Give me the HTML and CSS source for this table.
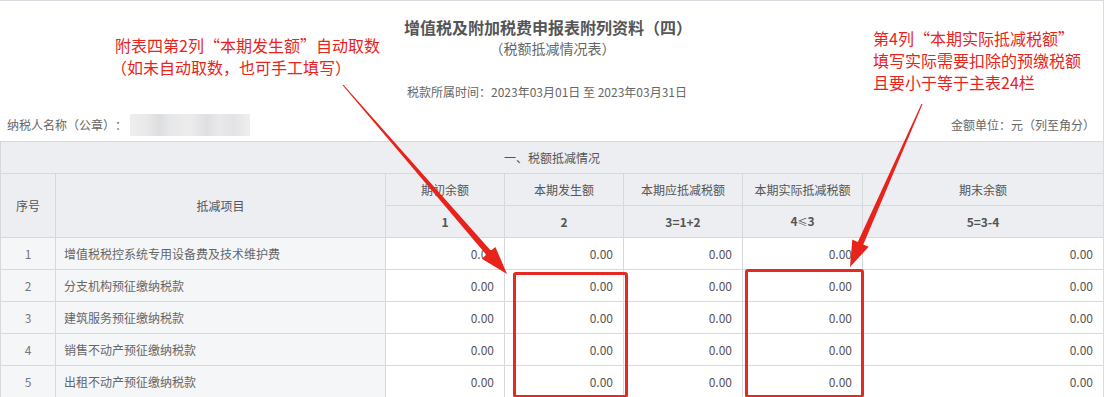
FILE: index.html
```html
<!DOCTYPE html>
<html lang="zh-CN">
<head>
<meta charset="utf-8">
<title>增值税及附加税费申报表附列资料（四）</title>
<link rel="stylesheet" href="styles.css">
</head>
<body>
<div class="page">
  <div class="head">
    <div class="title">增值税及附加税费申报表附列资料<span class="p">（</span>四<span class="p">）</span></div>
    <div class="subtitle"><span class="p">（</span>税额抵减情况表<span class="p">）</span></div>
    <div class="period">税款所属时间<span class="p">：</span>2023年03月01日 至 2023年03月31日</div>
  </div>
  <div class="meta">
    <div class="payer">纳税人名称<span class="p">（</span>公章<span class="p">）</span><span class="p">：</span><span class="blur"></span></div>
    <div class="unit">金额单位<span class="p">：</span>元<span class="p">（</span>列至角分<span class="p">）</span></div>
  </div>
  <table class="grid">
    <colgroup>
      <col class="c-no"><col class="c-item"><col class="c-n"><col class="c-n"><col class="c-n"><col class="c-n2"><col class="c-last">
    </colgroup>
    <thead>
      <tr><th colspan="7">一<span class="p">、</span>税额抵减情况</th></tr>
      <tr><th rowspan="2">序号</th><th rowspan="2">抵减项目</th><th>期初余额</th><th>本期发生额</th><th>本期应抵减税额</th><th>本期实际抵减税额</th><th>期末余额</th></tr>
      <tr class="nums"><th>1</th><th>2</th><th>3=1+2</th><th>4<span class="le">≤</span>3</th><th>5=3-4</th></tr>
    </thead>
    <tbody>
      <tr><td class="no">1</td><td class="item">增值税税控系统专用设备费及技术维护费</td><td>0.00</td><td>0.00</td><td>0.00</td><td>0.00</td><td>0.00</td></tr>
      <tr><td class="no">2</td><td class="item">分支机构预征缴纳税款</td><td>0.00</td><td>0.00</td><td>0.00</td><td>0.00</td><td>0.00</td></tr>
      <tr><td class="no">3</td><td class="item">建筑服务预征缴纳税款</td><td>0.00</td><td>0.00</td><td>0.00</td><td>0.00</td><td>0.00</td></tr>
      <tr><td class="no">4</td><td class="item">销售不动产预征缴纳税款</td><td>0.00</td><td>0.00</td><td>0.00</td><td>0.00</td><td>0.00</td></tr>
      <tr><td class="no">5</td><td class="item">出租不动产预征缴纳税款</td><td>0.00</td><td>0.00</td><td>0.00</td><td>0.00</td><td>0.00</td></tr>
    </tbody>
  </table>

  <div class="note note-left">
    <div>附表四第2列“本期发生额”自动取数</div>
    <div class="indent"><span class="p">（</span>如未自动取数<span class="p">，</span>也可手工填写<span class="p">）</span></div>
  </div>
  <div class="note note-right">
    <div>第4列“本期实际抵减税额”</div>
    <div>填写实际需要扣除的预缴税额</div>
    <div>且要小于等于主表24栏</div>
  </div>
  <div class="hl hl-1"></div>
  <div class="hl hl-2"></div>
  <svg class="arrows" width="1107" height="397" viewBox="0 0 1107 397">
    <polygon fill="#e8231c" points="342.6,84.3 486.3,253.8 481.8,257.7 507,273 495.4,245.9 490.9,249.8 343.4,83.7"/>
    <polygon fill="#e8231c" points="921.5,102.8 857.8,241.0 852.3,238.6 850,266 868.7,245.8 863.3,243.4 922.5,103.2"/>
  </svg>
</div>
</body>
</html>
```
FILE: styles.css
```css
html, body {
  margin: 0;
  padding: 0;
  background: #fff;
}
body {
  font-family: "Noto Sans CJK SC", "Noto Sans", sans-serif;
  color: #555;
  font-size: 12px;
}
.p {
  display: inline-block;
  width: 1em;
  text-align: center;
  line-height: 1;
}
.page {
  position: relative;
  width: 1103px;
  height: 397px;
  border-top: 1px solid #d9dbe0;
  border-right: 1px solid #d9dbe0;
  overflow: hidden;
}
.head {
  padding-top: 16px;
}
.title {
  text-align: center;
  font-size: 16px;
  font-weight: bold;
  line-height: 20px;
  color: #555;
  padding-right: 7px;
}
.subtitle {
  margin-top: 2px;
  text-align: center;
  font-size: 14px;
  line-height: 18px;
  color: #666;
  padding-left: 2px;
}
.period {
  margin-top: 27px;
  margin-left: 407px;
  line-height: 16px;
  color: #666;
}
.meta {
  display: flex;
  justify-content: space-between;
  align-items: center;
  margin-top: 17px;
  padding: 0 8px 0 7px;
  height: 16px;
  line-height: 16px;
  color: #666;
}
.payer {
  display: flex;
  align-items: center;
}
.blur {
  display: inline-block;
  width: 120px;
  height: 22px;
  margin-left: 3px;
  background: linear-gradient(90deg, #eeeeef 0, #e9e9ea 14%, #dcdddf 24%, #e8e8ea 34%, #ececed 50%, #dedfe1 64%, #e9e9eb 74%, #e3e3e5 86%, #efeff0 100%);
}
.grid {
  margin-top: 8px;
  width: 1104px;
  border-collapse: collapse;
  table-layout: fixed;
}
.c-no { width: 55px; }
.c-item { width: 330px; }
.c-n { width: 119px; }
.c-n2 { width: 120px; }
.c-last { width: 241px; }
.grid th, .grid td {
  border: 1px solid #d6d8dc;
  height: 31px;
  padding: 0;
  font-size: 12px;
  line-height: 16px;
}
.grid th {
  background: #eceef2;
  font-weight: normal;
  color: #555;
  text-align: center;
}
.grid .nums th {
  font-weight: bold;
}
.grid .le {
  font-size: 10px;
  font-weight: normal;
}
.grid td {
  background: #fff;
  text-align: right;
  padding-right: 10px;
  color: #555;
}
.grid td.no {
  background: #f5f6f8;
  text-align: center;
  padding-right: 0;
  color: #777;
}
.grid td.item {
  background: #f5f6f8;
  text-align: left;
  padding-left: 8px;
  color: #666;
}
.note {
  position: absolute;
  color: #e8231c;
  font-size: 16px;
}
.note-left {
  left: 115px;
  top: 33px;
  line-height: 22px;
}
.note-left .indent {
  margin-left: -4px;
}
.note-right {
  left: 873px;
  top: 26px;
  line-height: 22px;
}
.hl {
  position: absolute;
  border: 3px solid #e42a22;
  border-radius: 3px;
  box-sizing: border-box;
}
.hl-1 {
  left: 513px;
  top: 271px;
  width: 115px;
  height: 126px;
}
.hl-2 {
  left: 745px;
  top: 268px;
  width: 119px;
  height: 129px;
}
.arrows {
  position: absolute;
  left: 0;
  top: 0;
  pointer-events: none;
}
```
